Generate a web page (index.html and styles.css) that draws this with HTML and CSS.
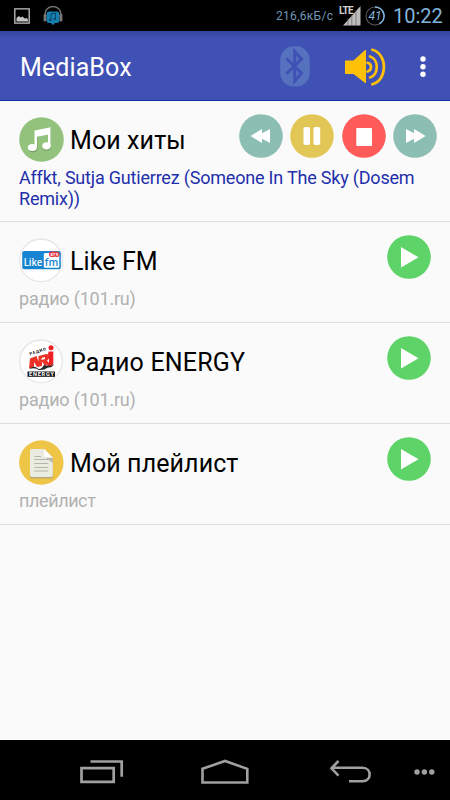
FILE: index.html
```html
<!DOCTYPE html>
<html lang="ru">
<head>
<meta charset="utf-8">
<title>MediaBox</title>
<link rel="stylesheet" href="styles.css">
</head>
<body>
<svg class="defs" aria-hidden="true">
  <symbol id="play" viewBox="0 0 44 44"><circle cx="22" cy="22" r="21.800" fill="#5ed468"/><path d="M14 12v20.500l17.500-10.200z" fill="#fff"/></symbol>
</svg>
<header class="status">
  <div class="notifications">
    <svg width="16" height="16" viewBox="0 0 16 16"><path d="M.8.8h14.400v14.400H.8z" fill="none" stroke="#c4c4c4" stroke-width="1.300"/><path d="M2.500 13.500V10l2.500-2 1.500 1.500 2-1 2 2 2-.5 1.500 1.500v2z" fill="#c4c4c4"/></svg>
    <svg width="20" height="20" viewBox="0 0 20 20"><path d="M2 11V8a8 7.500 0 0 1 16 0v3" fill="none" stroke="#777" stroke-width="1.300"/><rect x=".6" y="8" width="3" height="7.500" rx="1.300" fill="#777"/><rect x="16.400" y="8" width="3" height="7.500" rx="1.300" fill="#777"/><path d="M6 5.500h8q2.300 0 2.300 2.300v7q0 2.200-2.300 2.200h-2l-2 2.300L8 17H6q-2.300 0-2.300-2.200v-7q0-2.300 2.300-2.300z" fill="#147fae"/><path d="M8 14V8l4.500-1v6" fill="none" stroke="#073c5c" stroke-width=".9"/><ellipse cx="7.200" cy="14" rx="1.200" ry=".9" fill="#073c5c"/><ellipse cx="11.700" cy="13" rx="1.200" ry=".9" fill="#073c5c"/></svg>
  </div>
  <div class="indicators">
    <span class="speed">216,6кБ/с</span>
    <span class="signal"><svg width="22" height="20" viewBox="0 0 22 20"><path d="M4 19.500 21.500 0v19.500z" fill="#bdbdbd"/><path d="M8.800 12v8M12.800 9v11M17 4v16" stroke="#555" stroke-width=".6"/></svg><b>LTE</b></span>
    <span class="battery"><svg width="20" height="20" viewBox="0 0 20 20"><circle cx="10" cy="10" r="9" fill="none" stroke="#555" stroke-width="1.100"/><path d="M10 1a9 9 0 0 1 4.500 16.800" fill="none" stroke="#83b5dc" stroke-width="1.600"/></svg><i>41</i></span>
    <span class="clock">10:22</span>
  </div>
</header>
<nav class="appbar">
  <h1>MediaBox</h1>
  <svg class="bluetooth" width="30" height="41" viewBox="0 0 30 41"><rect x=".2" y=".3" width="29.600" height="40.200" rx="13.500" ry="14" fill="#5671be"/><path d="M6.500 12.500 21.500 27.200 14.700 35V5.500l6.800 7.500L6.500 27.700" fill="none" stroke="#3f51b5" stroke-width="3"/></svg>
  <svg class="volume" width="42" height="38" viewBox="0 0 42 38"><path d="M.5 12.500h8L19.800 2.200q1.200-.8 1.200.8v31q0 1.500-1.200.7L8.500 26h-8q-.5 0-.5-.7V13q0-.5.500-.5z" fill="#ffc107"/><g fill="none" stroke="#ffc107" stroke-width="2.700" stroke-linecap="round"><path d="M22.500 14.800q3.500.8 3.500 4.200t-3.500 4.500M25 8.500c9 2.500 9 18.500 0 21M27.300 1.800c15.500 4 15.500 30.500 0 34.500"/></g></svg>
  <svg class="more" width="6" height="22" viewBox="0 0 6 22"><g fill="#fff"><circle cx="3" cy="3" r="2.700"/><circle cx="3" cy="10.700" r="2.700"/><circle cx="3" cy="18.300" r="2.700"/></g></svg>
</nav>
<main>
  <section class="row current">
    <div class="head">
      <svg width="45" height="45" viewBox="0 0 45 45"><circle cx="22.500" cy="22.500" r="22.300" fill="#92c27c"/><g transform="translate(.5 1)" fill="#759b63"><path d="M15.500 13.500 31 10.300V28h-2.500V16.800L18 18.800V30h-2.500z"/><ellipse cx="13.300" cy="30.700" rx="4.300" ry="3.500"/><ellipse cx="27.200" cy="29" rx="4.300" ry="3.500"/></g><g fill="#fff"><path d="M15.500 13.500 31.500 10.300V28H29V17.800L18 19.800V30h-2.500z"/><ellipse cx="13.300" cy="30.500" rx="4.500" ry="3.600"/><ellipse cx="27.500" cy="28.800" rx="4.300" ry="3.600"/></g></svg>
      <h2>Мои хиты</h2>
      <div class="controls">
        <svg width="44" height="44" viewBox="0 0 44 44"><circle cx="22" cy="22" r="21.800" fill="#8dbeb3"/><path d="M11.500 22 23 15v4.200l8-4.200v14l-8-4.200V29z" fill="#fff"/></svg>
        <svg width="44" height="44" viewBox="0 0 44 44"><circle cx="22" cy="22" r="21.800" fill="#e2c756"/><rect x="13.500" y="13" width="6.500" height="18" rx="2" fill="#fff"/><rect x="23.500" y="13" width="6.700" height="18" rx="2" fill="#fff"/></svg>
        <svg width="44" height="44" viewBox="0 0 44 44"><circle cx="22" cy="22" r="21.800" fill="#ff5b59"/><rect x="14.300" y="14" width="15.700" height="18" rx=".8" fill="#fff"/></svg>
        <svg width="44" height="44" viewBox="0 0 44 44"><circle cx="22" cy="22" r="21.800" fill="#8dbeb3"/><path d="M32.700 22 21 15v4.200L13 15v14l8-4.200V29z" fill="#fff"/></svg>
      </div>
    </div>
    <p>Affkt, Sutja Gutierrez (Someone In The Sky (Dosem<br>Remix))</p>
  </section>
  <section class="row">
    <div class="head">
      <svg width="45" height="45" viewBox="0 0 45 45"><circle cx="22" cy="22.300" r="21.300" fill="#fff" stroke="#e6e6e6" stroke-width="1.300"/><rect x="3.200" y="13" width="38.600" height="18.200" rx="2.200" fill="#1684d0"/><rect x="24.800" y="15" width="15.500" height="14.700" rx="1.500" fill="#fff"/><rect x="30" y="13.500" width="10.500" height="5.500" rx="2.500" fill="#e83b45"/><text class="like" x="4.700" y="27.500" textLength="18.500" lengthAdjust="spacingAndGlyphs" fill="#fff">Like</text><text class="fm" x="25.800" y="28" textLength="13.500" lengthAdjust="spacingAndGlyphs" fill="#1684d0">fm</text><text class="freq" x="31.500" y="17.700" textLength="7.500" fill="#fff">87,9</text></svg>
      <h2>Like FM</h2>
      <svg class="play" width="44" height="44"><use href="#play"/></svg>
    </div>
    <p>радио (101.ru)</p>
  </section>
  <section class="row">
    <div class="head">
      <svg width="45" height="45" viewBox="0 0 45 45"><circle cx="22" cy="22.300" r="21.300" fill="#fff" stroke="#e6e6e6" stroke-width="1.300"/><text class="radio-label" x="11" y="16.300" textLength="17" transform="rotate(-18 11 16.300)">РАДИО</text><path d="M11 19.500 17.500 17l2 5.500V17l8-2q4 .5 2.500 4.500l-2 2 2.500 3.500-5 1.500-2.500-4v4.500l-5 1-3-5v5.500l-5 1z" fill="#ed3328"/><path d="M22.500 19 26 18v2l-3.500 1z" fill="#fff"/><path d="M29.500 12.500h4.800v11q0 4-5.800 4v-3.500q1.500 0 1.500-1.500v-6.500h-1z" fill="#ed2024"/><circle cx="32" cy="8.700" r="2.500" fill="#ed2024"/><path d="M10.500 30q4-4 7.500-1t7-3q4 1 8 .5l2-2q-1 4.500-6 4-4 3-9 2.500-4-3-9.500-1z" fill="#292929"/><rect x="8.500" y="32.500" width="27.500" height="5.300" fill="#151515"/><text class="energy" x="10" y="37.100" textLength="25" fill="#fff">ENERGY</text></svg>
      <h2 class="energy-name">Радио ENERGY</h2>
      <svg class="play" width="44" height="44"><use href="#play"/></svg>
    </div>
    <p>радио (101.ru)</p>
  </section>
  <section class="row">
    <div class="head">
      <svg width="45" height="45" viewBox="0 0 45 45"><circle cx="22.300" cy="22.500" r="22.200" fill="#efc547"/><path d="M13 10h13l8 9v17.500q0 2-2 2H13q-2 0-2-2V12q0-2 2-2z" fill="#b7a77a"/><path d="M13 9h12.500l8.300 9v17q0 2-2 2H13q-2 0-2-2V11q0-2 2-2z" fill="#ebece1"/><path d="M25.500 17h8.300v6z" fill="#b8b7aa"/><path d="M25.300 9l8.500 8.700h-6.500q-2 0-2-2z" fill="#fff"/><path d="M15.300 16.500H22M15.300 19.500h14M15.300 23.500h14M15.300 27.500h14M15.300 31h14" stroke="#b5b5a9" stroke-width="1.200"/></svg>
      <h2>Мой плейлист</h2>
      <svg class="play" width="44" height="44"><use href="#play"/></svg>
    </div>
    <p class="playlist">плейлист</p>
  </section>
</main>
<footer>
  <svg width="45" height="24" viewBox="0 0 45 24"><path d="M1.500 8.200h32.200v13.600H1.500zM10.500 1.500h31.200v15.200" fill="none" stroke="#a0a0a0" stroke-width="2.700"/></svg>
  <svg class="home" width="48" height="26" viewBox="0 0 48 26"><path d="M1.500 9.800 24 2l22.300 7.800v13.700H1.500z" fill="none" stroke="#a0a0a0" stroke-width="2.600"/></svg>
  <svg class="back" width="44" height="24" viewBox="0 0 44 24"><path d="M9.500 1 2.500 8.300l7 7.300M3 7.800h30.500c9.500 0 9.500 13.500 0 13.500H20" fill="none" stroke="#a0a0a0" stroke-width="2.600"/></svg>
  <svg class="dots" width="21" height="6" viewBox="0 0 21 6"><g fill="#a0a0a0"><circle cx="3" cy="3" r="2.700"/><circle cx="10.400" cy="3" r="2.700"/><circle cx="17.800" cy="3" r="2.700"/></g></svg>
</footer>
</body>
</html>
```
FILE: styles.css
```css
* { box-sizing: border-box; }
body { margin: 0; height: 800px; display: flex; flex-direction: column; overflow: hidden; background: #fafafa; font-family: Roboto, sans-serif; }
svg { display: block; flex: none; }
.defs { display: none; }
h1, h2, p { margin: 0; font-weight: 400; white-space: nowrap; }
.status { height: 31px; flex: none; background: #000; color: #83b5dc; display: flex; justify-content: space-between; padding: 0 8px 0 14px; }
.notifications { display: flex; gap: 13px; padding-top: 6px; }
.notifications svg:first-child { margin-top: 2px; }
.indicators { display: flex; align-items: center; white-space: nowrap; }
.speed { font-size: 12px; width: 58px; margin-right: 5px; letter-spacing: .3px; color: #7097b7; }
.signal { position: relative; width: 22px; margin-right: 4px; }
.signal b { position: absolute; left: 0; top: 0; font: 700 10px/10px Roboto, sans-serif; letter-spacing: -.8px; color: #d0d0d0; text-shadow: 0 0 1px #000; }
.battery { position: relative; width: 20px; margin-right: 8px; }
.battery i { position: absolute; inset: 0; text-align: center; font: italic 12px/20px Roboto, sans-serif; }
.clock { font-size: 20px; width: 49px; padding-top: 1px; }
.appbar { height: 70px; flex: none; background: linear-gradient(#35459d, #3f51b5 8px); border-bottom: 1px solid #0b2fa9; color: #fff; display: flex; align-items: center; padding: 2px 24px 0 20px; }
h1 { font-size: 25px; line-height: 30px; width: 260px; padding-top: 2px; letter-spacing: .1px; }
.volume { margin-left: 35px; }
.more { margin-left: auto; }
.row { height: 101px; padding: 16px 19px 0; border-bottom: 1px solid #dfdfdf; }
.row.current { height: 121px; padding-right: 13px; }
.head { display: flex; height: 45px; }
h2 { font-size: 25px; line-height: 47px; margin-left: 6px; color: #000; letter-spacing: .1px; }
.energy-name { letter-spacing: .2px; }
.controls { display: flex; gap: 7.300px; margin: -3px 0 0 auto; }
.play { margin: -3px 0 0 auto; }
p { font-size: 18px; line-height: 22px; margin-top: 5px; color: #b1b1b1; letter-spacing: -.2px; }
.playlist { letter-spacing: -.4px; }
.current p { line-height: 20.500px; margin-top: 6px; color: #1f2fac; }
.like { font: 600 10px "Open Sans", sans-serif; }
.fm { font: 600 11px "Open Sans", sans-serif; }
.freq { font: 700 4px Roboto, sans-serif; }
.radio-label { font: 700 4px Roboto, sans-serif; }
.energy { font: 700 5.500px Roboto, sans-serif; }
footer { height: 60px; margin-top: auto; flex: none; background: #000; display: flex; align-items: center; padding: 4px 15px 0 80px; }
.home { margin-left: 76px; }
.back { margin-left: 80px; }
.dots { margin-left: auto; }
```
